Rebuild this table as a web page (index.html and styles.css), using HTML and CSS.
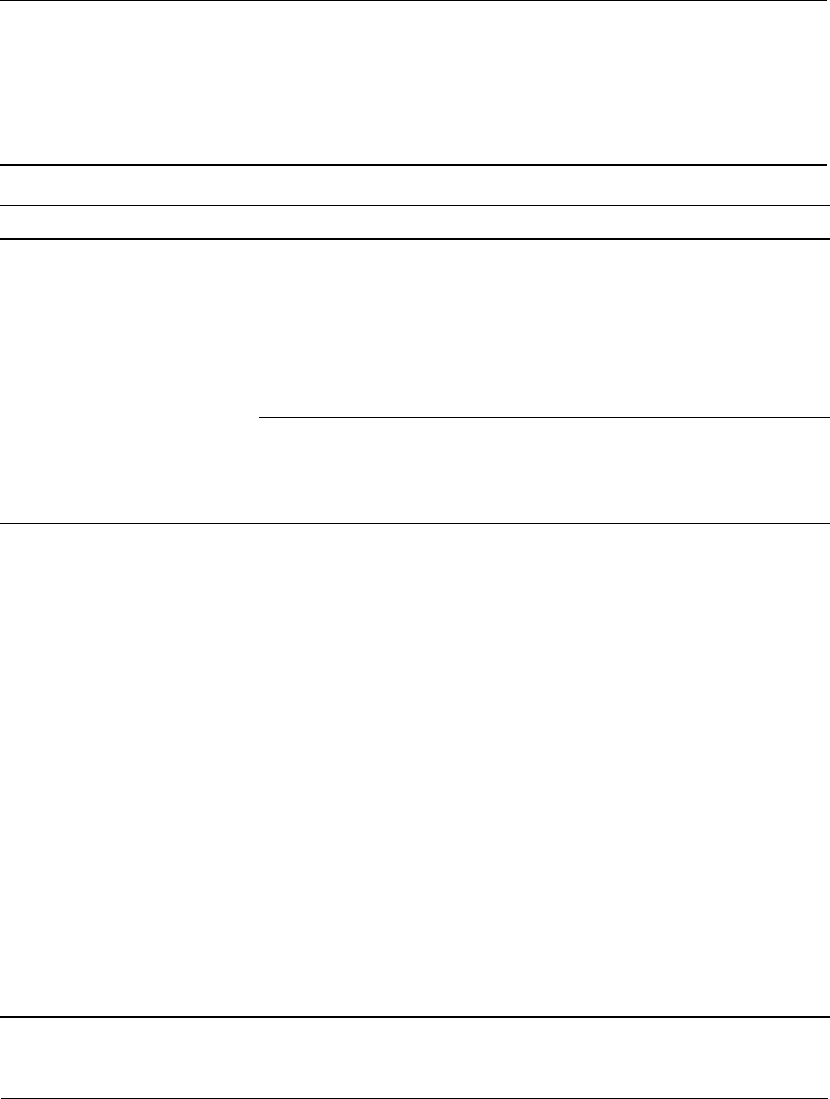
FILE: index.html
```html
<!DOCTYPE html>
<html lang="en">
<head>
    <meta charset="UTF-8">
    <meta name="viewport" content="width=device-width, initial-scale=1.0">
    <title>Document</title>
    <link rel="stylesheet" href="styles.css">
</head>
<body>
    <div class="page">
        <div class="doc-head"></div>

        <div class="row row-title"></div>
        <div class="row row-sub"></div>

        <div class="section section-split">
            <div class="split-left"></div>
            <div class="split-right">
                <div class="split-top"></div>
                <div class="split-bottom"></div>
            </div>
        </div>

        <div class="section section-body"></div>

        <div class="section section-foot"></div>
    </div>
</body>
</html>
```

FILE: styles.css
```css
body {
    margin: 0;
    background-color: #fff;
    font-family: "Liberation Sans", Arial, sans-serif;
    color: #000;
}
.page {
    width: 830px;
}
.doc-head {
    width: 827px;
    height: 163px;
    border-top: 1px solid #000;
    border-bottom: 2px solid #000;
    box-sizing: content-box;
}
.row-title {
    height: 39px;
    border-bottom: 1px solid #000;
}
.row-sub {
    height: 32px;
    border-bottom: 2px solid #000;
}
.section-split {
    display: flex;
    height: 283px;
    border-bottom: 1px solid #000;
}
.split-left {
    width: 259px;
}
.split-right {
    flex-grow: 1;
    display: flex;
    flex-direction: column;
}
.split-top {
    height: 177px;
    border-bottom: 1px solid #000;
}
.split-bottom {
    flex-grow: 1;
}
.section-body {
    height: 492px;
    border-bottom: 2px solid #000;
}
.section-foot {
    height: 80px;
    margin-left: 1px;
    width: 827px;
    border-bottom: 1px solid #000;
}
```
